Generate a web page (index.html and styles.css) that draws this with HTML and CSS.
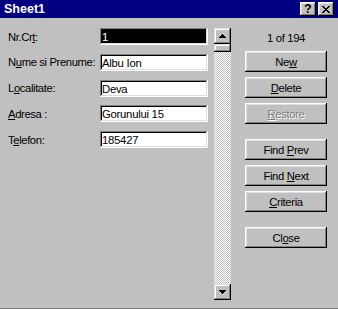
FILE: index.html
```html
<!DOCTYPE html>
<html lang="en">
<head>
  <meta charset="UTF-8">
  <title>Sheet1</title>
  <link rel="stylesheet" href="styles.css">
</head>
<body>
  <div class="dialog">
    <div class="titlebar">
      <span class="title">Sheet1</span>
      <div class="caption-buttons">
        <button class="cap help">?</button>
        <button class="cap close">
          <svg width="8" height="7" viewBox="0 0 8 7"><path d="M0 0h2v1h1v1h2V1h1V0h2v1H7v1H6v1H5v1h1v1h1v1h1v1H6V6H5V5H3v1H2v1H0V6h1V5h1V4h1V3H2V2H1V1H0z" fill="#000"/></svg>
        </button>
      </div>
    </div>

    <div class="content">
      <!-- Record fields -->
      <div class="fields">
        <label for="nrCrt">Nr.Cr<u>t</u>:</label>
        <input type="text" id="nrCrt" class="selected" value="1">
        <label for="nume">N<u>u</u>me si Prenume:</label>
        <input type="text" id="nume" value="Albu Ion">
        <label for="localitate">L<u>o</u>calitate:</label>
        <input type="text" id="localitate" value="Deva">
        <label for="adresa"><u>A</u>dresa :</label>
        <input type="text" id="adresa" value="Gorunului 15">
        <label for="telefon">T<u>e</u>lefon:</label>
        <input type="text" id="telefon" value="185427">
      </div>

      <!-- Record scrollbar -->
      <div class="scrollbar">
        <div class="scroll-btn"><svg width="7" height="4" viewBox="0 0 7 4"><path d="M3 0h1v1h1v1h1v1h1v1H0V3h1V2h1V1h1z" fill="#000"/></svg></div>
        <div class="thumb"></div>
        <div class="track"></div>
        <div class="scroll-btn"><svg width="7" height="4" viewBox="0 0 7 4"><path d="M0 0h7v1H6v1H5v1H4v1H3V3H2V2H1V1H0z" fill="#000"/></svg></div>
      </div>

      <!-- Actions -->
      <div class="actions">
        <div class="counter">1 of 194</div>
        <div class="btn-group">
          <button class="btn">Ne<u>w</u></button>
          <button class="btn"><u>D</u>elete</button>
          <button class="btn" disabled><u>R</u>estore</button>
        </div>
        <div class="btn-group">
          <button class="btn">Find <u>P</u>rev</button>
          <button class="btn">Find <u>N</u>ext</button>
          <button class="btn"><u>C</u>riteria</button>
        </div>
        <div class="btn-group">
          <button class="btn">Cl<u>o</u>se</button>
        </div>
      </div>
    </div>
  </div>
</body>
</html>
```

FILE: styles.css
```css
body {
  margin: 0;
  font-family: "Liberation Sans", Arial, sans-serif;
  font-size: 11px;
  background-color: #c0c0c0;
}
.dialog {
  width: 338px;
  height: 309px;
  box-sizing: border-box;
  background-color: #c0c0c0;
  border-bottom: 1px solid #808080;
  overflow: hidden;
}
.titlebar {
  height: 18px;
  background-color: #000080;
  color: white;
  display: flex;
  align-items: center;
  justify-content: space-between;
  padding: 0 4px 0 4px;
}
.title {
  font-weight: bold;
  font-size: 12.5px;
}
.caption-buttons {
  display: flex;
  gap: 2px;
}
.cap {
  width: 16px;
  height: 14px;
  padding: 0;
  border: none;
  background-color: #c0c0c0;
  box-shadow: inset -1px -1px #000, inset 1px 1px #fff, inset -2px -2px #808080, inset 2px 2px #dfdfdf;
  display: flex;
  align-items: center;
  justify-content: center;
  font-family: "Liberation Sans", Arial, sans-serif;
  font-weight: bold;
  font-size: 12px;
  line-height: 14px;
  color: #000;
}
.cap svg {
  display: block;
}
.content {
  display: flex;
  padding: 10px 0 0 8px;
}
.fields {
  display: grid;
  grid-template-columns: 92px 108px;
  grid-auto-rows: 17px;
  row-gap: 8.75px;
  align-items: center;
  align-content: start;
}
.fields label {
  font-size: 11.3px;
  letter-spacing: -0.4px;
  white-space: nowrap;
  color: #000;
}
.fields input {
  width: 108px;
  height: 17px;
  box-sizing: border-box;
  border: none;
  margin: 0;
  padding: 1px 2px 0 2px;
  font-family: "Liberation Sans", Arial, sans-serif;
  font-size: 11.3px;
  letter-spacing: -0.25px;
  background-color: white;
  color: #000;
  box-shadow: inset -1px -1px #fff, inset 1px 1px #808080, inset -2px -2px #dfdfdf, inset 2px 2px #000;
  outline: none;
}
.fields input.selected {
  background-color: #000;
  color: white;
}
.scrollbar {
  width: 17px;
  height: 272px;
  margin-left: 6px;
  display: flex;
  flex-direction: column;
}
.scroll-btn, .thumb {
  background-color: #c0c0c0;
  box-shadow: inset -1px -1px #000, inset 1px 1px #dfdfdf, inset -2px -2px #808080, inset 2px 2px #fff;
}
.scroll-btn {
  height: 16px;
  display: flex;
  align-items: center;
  justify-content: center;
}
.scroll-btn svg {
  display: block;
}
.thumb {
  height: 8px;
}
.track {
  flex: 1;
  background: repeating-conic-gradient(#fff 0 25%, #c0c0c0 0 50%) 0 0 / 2px 2px;
}
.actions {
  margin-left: 14px;
  width: 82px;
  display: flex;
  flex-direction: column;
  gap: 15px;
}
.counter {
  text-align: center;
  font-size: 11.3px;
  letter-spacing: -0.35px;
  height: 23px;
  line-height: 20px;
  margin-bottom: -15px;
}
.btn-group {
  display: flex;
  flex-direction: column;
  gap: 5px;
}
.btn {
  width: 82px;
  height: 21px;
  padding: 0;
  border: none;
  background-color: #c0c0c0;
  box-shadow: inset -1px -1px #000, inset 1px 1px #fff, inset -2px -2px #808080, inset 2px 2px #dfdfdf;
  font-family: "Liberation Sans", Arial, sans-serif;
  font-size: 11.3px;
  letter-spacing: -0.35px;
  color: #000;
}
.btn:disabled {
  color: #808080;
  text-shadow: 1px 1px #fff;
}
```
